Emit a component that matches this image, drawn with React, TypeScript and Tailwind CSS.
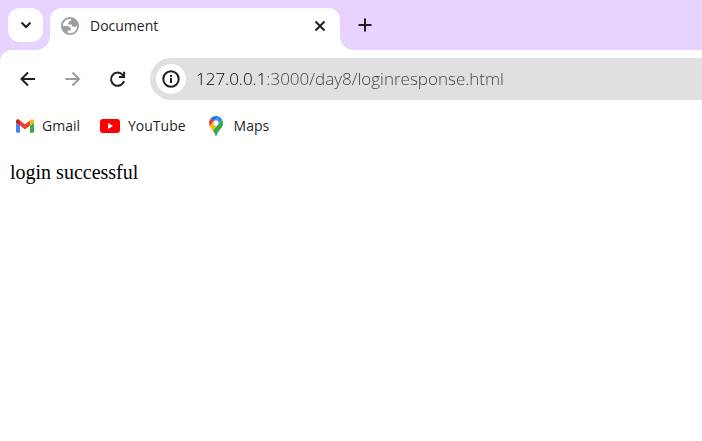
import type { ReactNode } from "react";

function GlobeIcon() {
  return (
    <svg viewBox="2 2 20 20" className="size-[18px] shrink-0" aria-hidden="true">
      <path
        fill="#9aa0a6"
        fillRule="evenodd"
        d="M12 2C6.48 2 2 6.48 2 12s4.48 10 10 10 10-4.48 10-10S17.52 2 12 2zM4 12h4.4c3.407.022 4.922 1.73 4.543 5.127H9.488v2.47a8.004 8.004 0 0 0 10.498-8.083C19.327 12.504 18.332 13 17 13c-2.137 0-3.21-.916-3.21-2.75h-3.748c-.274-2.728.683-4.092 2.87-4.092 0-.975.327-1.597.811-1.97A8.004 8.004 0 0 0 4 12z"
      />
    </svg>
  );
}

function GmailIcon() {
  return (
    <svg viewBox="52 42 88 66" className="h-[14px] w-[18px]" aria-hidden="true">
      <path fill="#4285f4" d="M58 108h14V74L52 59v43c0 3.32 2.69 6 6 6" />
      <path fill="#34a853" d="M120 108h14c3.32 0 6-2.69 6-6V59l-20 15" />
      <path fill="#fbbc04" d="M120 48v26l20-15v-8c0-7.42-8.47-11.65-14.4-7.2" />
      <path fill="#ea4335" d="M72 74V48l24 18 24-18v26L96 92" />
      <path fill="#c5221f" d="M52 51v8l20 15V48l-5.6-4.2c-5.94-4.45-14.4-.22-14.4 7.2" />
    </svg>
  );
}

function YouTubeIcon() {
  return (
    <svg viewBox="0 0 20 14" className="h-[14px] w-5" aria-hidden="true">
      <rect width="20" height="14" rx="3" fill="#f00" />
      <path d="M8 4v6l5-3z" fill="#fff" />
    </svg>
  );
}

function MapsIcon() {
  return (
    <svg viewBox="0 0 92.3 132.3" className="size-5" aria-hidden="true">
      <path fill="#1a73e8" d="M60.2 2.2C55.8.8 51 0 46.1 0 32 0 19.3 6.4 10.8 16.5l21.8 18.3L60.2 2.2z" />
      <path fill="#ea4335" d="M10.8 16.5C4.1 24.5 0 34.9 0 46.1c0 8.7 1.7 15.7 4.6 22l28-33.3-21.8-18.3z" />
      <path fill="#4285f4" d="M46.2 28.5c9.8 0 17.7 7.9 17.7 17.7 0 4.3-1.6 8.3-4.2 11.4 0 0 13.9-16.6 27.5-32.7-5.6-10.8-15.3-19-27-22.7L32.6 34.8c3.3-3.8 8.1-6.3 13.6-6.3" />
      <path fill="#fbbc04" d="M46.2 63.8c-9.8 0-17.7-7.9-17.7-17.7 0-4.3 1.5-8.3 4.1-11.3l-28 33.3c4.8 10.6 12.8 19.2 21 29.9l34.1-40.5c-3.3 3.9-8.1 6.3-13.5 6.3" />
      <path fill="#34a853" d="M59.1 109.2c15.4-24.1 33.3-35 33.3-63 0-7.7-1.9-14.9-5.2-21.3L25.6 98c2.6 3.4 5.3 7.3 7.9 11.3 9.4 14.5 6.8 23.1 12.8 23.1s3.4-8.7 12.8-23.2" />
    </svg>
  );
}

function StrokeIcon({ d }: { d: string }) {
  return (
    <svg viewBox="0 0 20 20" className="size-5" fill="none" stroke="currentColor" strokeWidth="2" aria-hidden="true">
      <path d={d} />
    </svg>
  );
}

function IconButton({ label, disabled, children }: { label: string; disabled?: boolean; children: ReactNode }) {
  return (
    <button
      type="button"
      aria-label={label}
      disabled={disabled}
      className="flex size-7 shrink-0 items-center justify-center rounded-full text-[#1f1f1f] disabled:text-[#9c9c9c]"
    >
      {children}
    </button>
  );
}

function Bookmark({ label, children }: { label: string; children: ReactNode }) {
  return (
    <a href="#" className="flex items-center gap-2 text-[#1f1f1f]">
      {children}
      {label}
    </a>
  );
}

export default function App() {
  return (
    <div className="min-h-screen bg-white font-['Open_Sans','Noto_Sans',sans-serif] text-sm text-[#1f1f1f]">
      <header>
        <div className="flex h-[50px] bg-[#e8d3ff] pl-2">
          <button
            type="button"
            aria-label="Search tabs"
            className="mt-2 flex h-[34px] w-[35px] shrink-0 items-center justify-center rounded-xl bg-white"
          >
            <StrokeIcon d="M5.5 7.5 10 12 14.5 7.5" />
          </button>
          <div className="relative ml-[7px] mt-2 flex w-[290px] items-center rounded-t-xl bg-white pb-[6px] pl-[11px] pr-[10px]">
            <svg viewBox="0 0 14 14" className="absolute -left-[14px] bottom-0 size-[14px]" fill="#fff" aria-hidden="true">
              <path d="M14 0A14 14 0 0 1 0 14H14Z" />
            </svg>
            <svg viewBox="0 0 14 14" className="absolute -right-[14px] bottom-0 size-[14px]" fill="#fff" aria-hidden="true">
              <path d="M0 0A14 14 0 0 0 14 14H0Z" />
            </svg>
            <GlobeIcon />
            <span className="ml-[11px] flex-1">Document</span>
            <button type="button" aria-label="Close tab" className="flex size-5 items-center justify-center">
              <StrokeIcon d="m5.5 5.5 9 9m0-9-9 9" />
            </button>
          </div>
          <button type="button" aria-label="New tab" className="ml-[15px] flex h-[50px] w-5 items-center justify-center">
            <StrokeIcon d="M10 3.5v13M3.5 10h13" />
          </button>
        </div>

        <div className="bg-[#e8d3ff]">
          <div className="flex items-center rounded-tl-xl bg-white pl-[14px] pt-2">
            <div className="flex gap-[17px]">
              <IconButton label="Back">
                <StrokeIcon d="M17 10H4M10 3.5 3.5 10l6.5 6.5" />
              </IconButton>
              <IconButton label="Forward" disabled>
                <StrokeIcon d="M2.5 10h13M9.5 3.5 16 10l-6.5 6.5" />
              </IconButton>
              <IconButton label="Reload">
                <StrokeIcon d="M16 12A6.6 6.6 0 1 1 14.8 6.1L16.2 7.6M16.1 2.8V7.9H10.9" />
              </IconButton>
            </div>
            <div className="ml-[18px] flex h-[42px] flex-1 items-center rounded-l-full bg-[#e0e0e0] pl-[6px]">
              <button
                type="button"
                aria-label="View site information"
                className="flex size-[30px] shrink-0 items-center justify-center rounded-full bg-white"
              >
                <svg viewBox="0 0 18 18" className="size-[18px]" aria-hidden="true">
                  <circle cx="9" cy="9" r="7.7" fill="none" stroke="#1f1f1f" strokeWidth="2" />
                  <path d="M8 8h2v5H8zM8 5h2v2H8z" fill="#1f1f1f" />
                </svg>
              </button>
              <input
                type="text"
                aria-label="Address"
                defaultValue="127.0.0.1:3000/day8/loginresponse.html"
                className="ml-[10px] min-w-0 flex-1 bg-linear-to-r from-black from-[69px] to-[#3c3c3c] to-[69px] bg-clip-text text-[17px] leading-6 font-light text-transparent caret-black outline-none"
              />
            </div>
          </div>
        </div>

        <nav aria-label="Bookmarks" className="flex h-[52px] items-center gap-5 px-4">
          <Bookmark label="Gmail">
            <GmailIcon />
          </Bookmark>
          <Bookmark label="YouTube">
            <YouTubeIcon />
          </Bookmark>
          <Bookmark label="Maps">
            <MapsIcon />
          </Bookmark>
        </nav>
      </header>

      <main className="px-[10px] pt-2 font-['Liberation_Serif',serif] text-xl leading-6 text-black">
        login successful
      </main>
    </div>
  );
}
